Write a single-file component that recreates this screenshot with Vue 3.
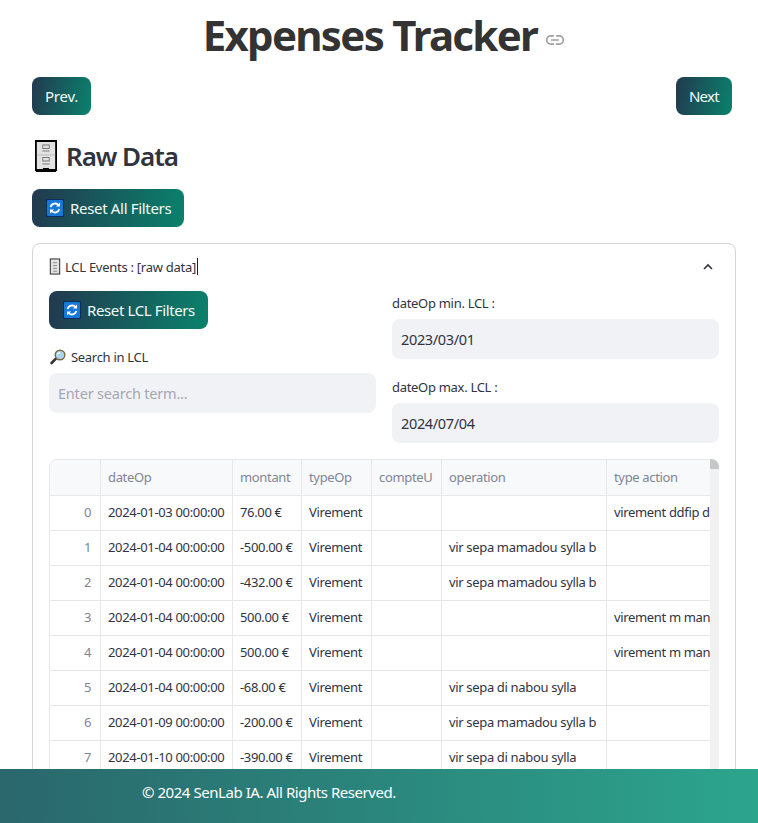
<script setup>
const columns = ['dateOp', 'montant', 'typeOp', 'compteU', 'operation', 'type action']
const rows = [
  ['0', '2024-01-03 00:00:00', '76.00 €', 'Virement', '', '', 'virement ddfip d'],
  ['1', '2024-01-04 00:00:00', '-500.00 €', 'Virement', '', 'vir sepa mamadou sylla b', ''],
  ['2', '2024-01-04 00:00:00', '-432.00 €', 'Virement', '', 'vir sepa mamadou sylla b', ''],
  ['3', '2024-01-04 00:00:00', '500.00 €', 'Virement', '', '', 'virement m man'],
  ['4', '2024-01-04 00:00:00', '500.00 €', 'Virement', '', '', 'virement m man'],
  ['5', '2024-01-04 00:00:00', '-68.00 €', 'Virement', '', 'vir sepa di nabou sylla', ''],
  ['6', '2024-01-09 00:00:00', '-200.00 €', 'Virement', '', 'vir sepa mamadou sylla b', ''],
  ['7', '2024-01-10 00:00:00', '-390.00 €', 'Virement', '', 'vir sepa di nabou sylla', ''],
]
</script>

<template>
  <div class="page">
    <h1 class="title">
      Expenses Tracker
      <svg class="link" viewBox="0 0 24 24" width="20" height="20" fill="none" stroke="#a0a0a0" stroke-width="2" stroke-linecap="round">
        <path d="M10 7H7a5 5 0 0 0 0 10h3M14 7h3a5 5 0 0 1 0 10h-3M8 12h8" />
      </svg>
    </h1>

    <div class="nav">
      <button class="btn prev">Prev.</button>
      <button class="btn next">Next</button>
    </div>

    <h2 class="section">
      <svg class="cabinet" viewBox="0 0 24 32" width="22" height="32" preserveAspectRatio="none">
        <rect x="1" y="1" width="22" height="29" fill="#e2e2e2" stroke="#000" stroke-width="2" />
        <path d="M1 30h7l1-2h6l1 2h7v2H1z" fill="#000" />
        <rect x="8.5" y="5" width="7" height="3.5" fill="none" stroke="#777" />
        <path d="M8 11h8" stroke="#777" />
        <path d="M2 15h20" stroke="#bbb" />
        <rect x="8.5" y="17.5" width="7" height="3.5" fill="none" stroke="#777" />
        <path d="M8 24h8" stroke="#777" />
      </svg>
      Raw Data
    </h2>

    <button class="btn reset all">
      <svg class="refresh" viewBox="0 0 18 18" width="18" height="18">
        <rect width="18" height="18" fill="#0a2f5e" />
        <rect x="1" y="1" width="16" height="16" rx="1" fill="#1878d8" />
        <path d="M4.6 8a4.6 4.6 0 0 1 8-1.8M13.4 10a4.6 4.6 0 0 1-8 1.8" fill="none" stroke="#fff" stroke-width="1.8" />
        <path d="M14 3.6v4h-4zM4 14.4v-4h4z" fill="#fff" />
      </svg>
      Reset All Filters
    </button>

    <section class="card">
      <div class="summary">
        <span class="summary-label">
          <svg viewBox="0 0 12 18" width="12" height="17">
            <rect x="1" y="1" width="10" height="16" fill="#e2e2e2" stroke="#222" />
            <path d="M4 5h4M4 8h4M4 11h4M4 14h4" stroke="#888" />
          </svg>
          LCL Events : [raw data]<i class="caret"></i>
        </span>
        <svg class="chevron" viewBox="0 0 12 8" width="12" height="8" fill="none" stroke="#31333f" stroke-width="1.6">
          <path d="M2 6l4-4 4 4" />
        </svg>
      </div>

      <div class="filters">
        <div class="column">
          <button class="btn reset">
            <svg class="refresh" viewBox="0 0 18 18" width="18" height="18">
              <rect width="18" height="18" fill="#0a2f5e" />
              <rect x="1" y="1" width="16" height="16" rx="1" fill="#1878d8" />
              <path d="M4.6 8a4.6 4.6 0 0 1 8-1.8M13.4 10a4.6 4.6 0 0 1-8 1.8" fill="none" stroke="#fff" stroke-width="1.8" />
              <path d="M14 3.6v4h-4zM4 14.4v-4h4z" fill="#fff" />
            </svg>
            Reset LCL Filters
          </button>
          <label class="label search-label">
            <svg viewBox="0 0 16 16" width="16" height="16">
              <path d="M6.2 9.4L1.6 14" stroke="#333" stroke-width="2.6" stroke-linecap="round" />
              <circle cx="10" cy="6" r="4.8" fill="#a9d4f2" stroke="#7d6a3c" stroke-width="1.4" />
              <path d="M7.6 5.6a2.6 2.6 0 0 1 2.4-2" fill="none" stroke="#fff" stroke-width="1.2" />
            </svg>
            Search in LCL
          </label>
          <div class="input placeholder">Enter search term...</div>
        </div>

        <div class="column">
          <label class="label date-label">dateOp min. LCL :</label>
          <div class="input">2023/03/01</div>
          <label class="label date-label second">dateOp max. LCL :</label>
          <div class="input">2024/07/04</div>
        </div>
      </div>

      <div class="table-wrap">
        <table class="table">
          <colgroup>
            <col class="c0" /><col class="c1" /><col class="c2" /><col class="c3" /><col class="c4" /><col class="c5" /><col class="c6" />
          </colgroup>
          <thead>
            <tr>
              <th></th>
              <th v-for="c in columns" :key="c">{{ c }}</th>
            </tr>
          </thead>
          <tbody>
            <tr v-for="r in rows" :key="r[0]">
              <td class="index">{{ r[0] }}</td>
              <td v-for="(v, i) in r.slice(1)" :key="i">{{ v }}</td>
            </tr>
          </tbody>
        </table>
        <div class="scrollbar"><div class="thumb"></div></div>
      </div>
    </section>

    <footer class="footer">© 2024 SenLab IA. All Rights Reserved.</footer>
  </div>
</template>

<style>
html, body { margin: 0; height: 100%; overflow: hidden; background: #fff; }
</style>

<style scoped>
.page {
  height: 100vh;
  overflow: hidden;
  padding: 0 22px 0 32px;
  box-sizing: border-box;
  font-family: "Noto Sans", "Open Sans", sans-serif;
  font-size: 14px;
  color: #31333f;
  background: #fff;
}
.title {
  margin: 0;
  padding-top: 8px;
  height: 77px;
  box-sizing: border-box;
  text-align: center;
  font-size: 42px;
  line-height: 54px;
  font-weight: 700;
  color: #333;
  letter-spacing: -1.7px;
  white-space: nowrap;
}
.link { vertical-align: 1px; margin-left: -1px; }
.nav { display: flex; justify-content: space-between; margin-right: 4px; height: 38px; }
.btn {
  display: inline-flex;
  align-items: center;
  gap: 6px;
  height: 38px;
  padding: 0 13px;
  border: 0;
  border-radius: 8px;
  background: linear-gradient(100deg, #22394f, #0a826c);
  color: #f2fbf8;
  font: inherit;
  font-size: 15px;
  letter-spacing: -0.45px;
  white-space: nowrap;
}
.prev { letter-spacing: -0.25px; }
.next { letter-spacing: -0.7px; }
.reset { padding: 0 13px 0 14px; letter-spacing: -0.38px; }
.all { padding-right: 13px; letter-spacing: -0.32px; }
.section {
  margin: 0;
  height: 74px;
  padding: 8px 0 0 3px;
  box-sizing: border-box;
  display: flex;
  align-items: center;
  gap: 9px;
  font-size: 26px;
  font-weight: 600;
  letter-spacing: -1.05px;
}
.cabinet { flex: none; }
.refresh { flex: none; }
.card {
  margin-top: 16px;
  width: 704px;
  box-sizing: border-box;
  height: 700px;
  border: 1px solid #d6d6d9;
  border-radius: 8px;
  padding: 0 16px;
}
.summary {
  height: 47px;
  box-sizing: border-box;
  padding: 0 5px 2px 0;
  display: flex;
  align-items: center;
  justify-content: space-between;
}
.summary-label { display: inline-flex; align-items: center; gap: 4px; font-size: 13px; letter-spacing: -0.27px; }
.caret { display: inline-block; width: 1px; height: 17px; background: #222; margin-left: -3px; }
.filters { display: grid; grid-template-columns: 327px 327px; gap: 16px; }
.column { display: flex; flex-direction: column; align-items: stretch; }
.column .btn { align-self: flex-start; }
.label { display: flex; align-items: center; gap: 5px; font-size: 13px; letter-spacing: -0.3px; }
.search-label { height: 44px; padding: 12px 0 0 1px; box-sizing: border-box; gap: 5px; }
.date-label { height: 28px; padding-bottom: 4px; box-sizing: border-box; }
.second { margin-top: 16px; }
.input {
  height: 40px;
  box-sizing: border-box;
  padding: 0 9px;
  display: flex;
  align-items: center;
  border-radius: 8px;
  background: #f0f2f6;
  font-size: 14.5px;
  letter-spacing: -0.35px;
}
.placeholder { color: #a3a8b4; letter-spacing: -0.2px; }
.table-wrap {
  position: relative;
  margin-top: 16px;
  width: 670px;
  height: 400px;
  overflow: hidden;
  border-radius: 8px 8px 0 0;
}
.table {
  width: 661px;
  table-layout: fixed;
  border-collapse: separate;
  border-spacing: 0;
  font-size: 13px;
  letter-spacing: -0.34px;
}
.c0 { width: 52px; } .c1 { width: 132px; } .c2 { width: 69px; } .c3 { width: 70px; }
.c4 { width: 70px; } .c5 { width: 165px; } .c6 { width: 103px; }
th, td {
  box-sizing: border-box;
  height: 35px;
  padding: 0 7px 3px;
  border-right: 1px solid #e6e7ea;
  border-bottom: 1px solid #e6e7ea;
  white-space: nowrap;
  overflow: hidden;
  text-align: left;
  font-weight: 400;
}
td:last-child, th:last-child { border-right: 0; padding-right: 0; text-overflow: clip; }
th {
  height: 37px;
  padding-bottom: 1px;
  background: #f8f9fb;
  color: #808495;
  border-top: 1px solid #e6e7ea;
}
th:first-child, td:first-child { border-left: 1px solid #e6e7ea; }
th:first-child { border-top-left-radius: 8px; }
.index { text-align: right; color: #808495; padding-right: 9px; }
.scrollbar { position: absolute; top: 0; right: 0; bottom: 0; width: 9px; background: #f1f1f1; }
.thumb { height: 10px; background: #c6c6c6; clip-path: polygon(0 0, 60% 0, 100% 40%, 100% 100%, 0 100%); }
.footer {
  position: fixed;
  left: 0;
  right: 0;
  bottom: 0;
  height: 54px;
  box-sizing: border-box;
  padding: 13px 0 0 142px;
  background: linear-gradient(90deg, #2a676c, #2ca58d);
  color: #fff;
  font-size: 15px;
  line-height: 21px;
  letter-spacing: -0.45px;
}
</style>
